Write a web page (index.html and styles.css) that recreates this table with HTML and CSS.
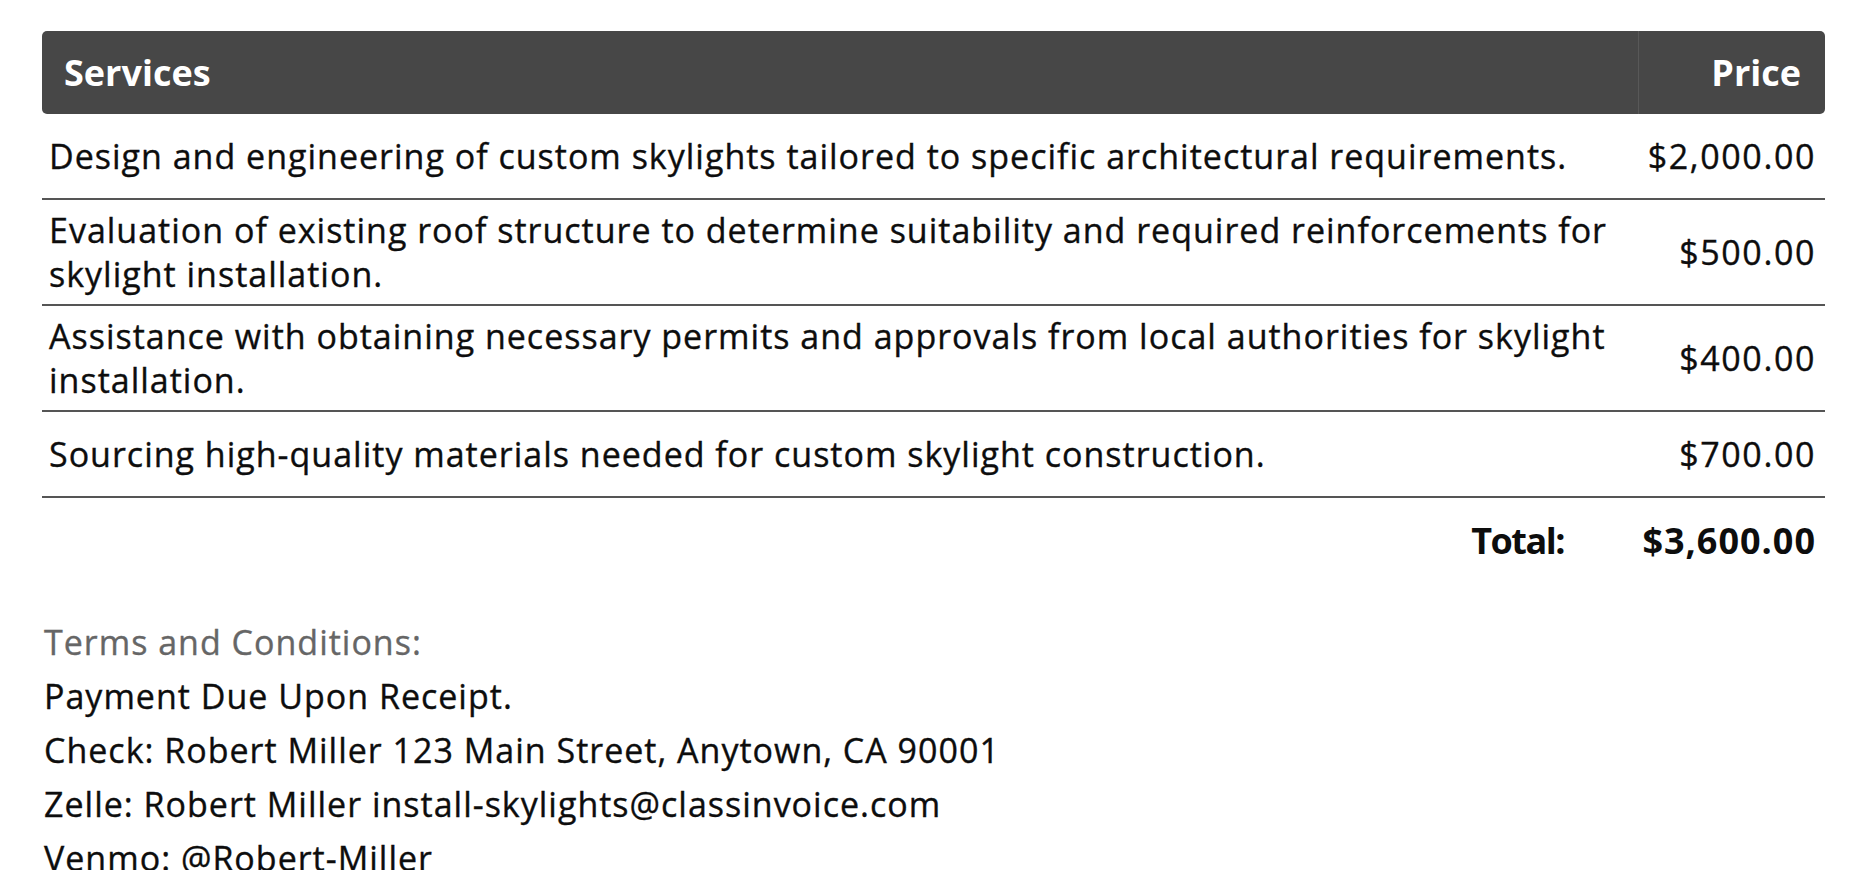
FILE: index.html
```html
<!DOCTYPE html>
<html lang="en">
<head>
<meta charset="utf-8">
<title>Invoice services</title>
<link rel="stylesheet" href="styles.css">
</head>
<body>
<div class="page">
  <div class="services">
    <div class="thead">
      <div class="th th-desc">Services</div>
      <div class="th th-price">Price</div>
    </div>
    <div class="tr">
      <div class="td td-desc">Design and engineering of custom skylights tailored to specific architectural requirements.</div>
      <div class="td td-price">$2,000.00</div>
    </div>
    <div class="tr">
      <div class="td td-desc">Evaluation of existing roof structure to determine suitability and required reinforcements for skylight installation.</div>
      <div class="td td-price">$500.00</div>
    </div>
    <div class="tr">
      <div class="td td-desc">Assistance with obtaining necessary permits and approvals from local authorities for skylight installation.</div>
      <div class="td td-price">$400.00</div>
    </div>
    <div class="tr">
      <div class="td td-desc">Sourcing high-quality materials needed for custom skylight construction.</div>
      <div class="td td-price">$700.00</div>
    </div>
    <div class="total">
      <div class="total-label">Total:</div>
      <div class="total-amount">$3,600.00</div>
    </div>
  </div>
  <div class="terms">
    <div class="terms-title">Terms and Conditions:</div>
    <div class="terms-line">Payment Due Upon Receipt.</div>
    <div class="terms-line">Check: Robert Miller 123 Main Street, Anytown, CA 90001</div>
    <div class="terms-line">Zelle: Robert Miller install-skylights@classinvoice.com</div>
    <div class="terms-line">Venmo: @Robert-Miller</div>
  </div>
</div>
</body>
</html>
```
FILE: styles.css
```css
* { box-sizing: border-box; }

html, body {
  margin: 0;
  padding: 0;
  background: #ffffff;
}

body {
  font-family: "Open Sans", "Noto Sans", sans-serif;
  font-size: 34px;
  font-weight: 400;
  letter-spacing: 1px;
  color: #0d0d0d;
  -webkit-text-stroke: 0.35px currentColor;
}

.page {
  padding: 31px 43px 0 42px;
}

.services {
  display: flex;
  flex-direction: column;
}

.thead {
  display: grid;
  grid-template-columns: 1fr 187px;
  height: 83px;
  background: #474747;
  border-radius: 5px;
  color: #ffffff;
}

.th {
  display: flex;
  align-items: center;
  font-size: 36px;
  font-weight: 700;
  letter-spacing: 0;
  -webkit-text-stroke: 0;
}

.th-desc {
  padding-left: 22px;
}

.th-price {
  justify-content: flex-end;
  padding-right: 24px;
  border-left: 1px solid #585858;
}

.tr {
  display: grid;
  grid-template-columns: 1fr 187px;
  border-bottom: 2px solid #555555;
}

.td {
  display: flex;
  align-items: center;
  min-height: 84px;
  line-height: 44px;
}

.td-desc {
  padding: 8px 12px 8px 7px;
}

.td-price {
  justify-content: flex-end;
  padding-right: 9px;
  letter-spacing: 1.6px;
}

.total {
  display: grid;
  grid-template-columns: 1fr 187px;
  height: 84px;
  font-weight: 700;
  font-size: 36px;
  -webkit-text-stroke: 0;
}

.total-label {
  display: flex;
  align-items: center;
  justify-content: flex-end;
  padding-right: 74px;
  letter-spacing: -1.5px;
}

.total-amount {
  display: flex;
  align-items: center;
  justify-content: flex-end;
  padding-right: 9px;
  letter-spacing: 1px;
}

.terms {
  padding: 33px 0 0 2px;
  line-height: 54px;
}

.terms-title {
  color: #666666;
}

.terms-line {
  color: #0d0d0d;
}
```
